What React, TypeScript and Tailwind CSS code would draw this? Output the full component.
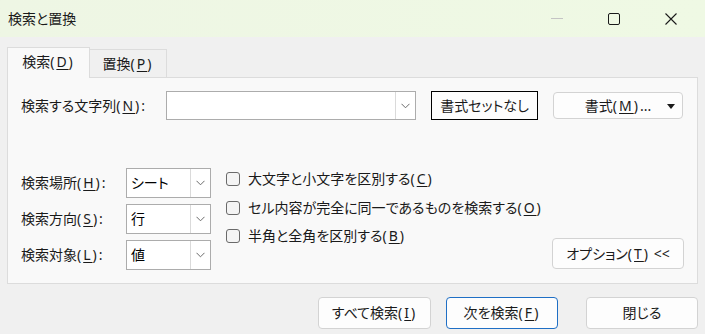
import React from 'react';

const font = { fontFamily: '"Noto Sans", "Noto Sans CJK JP", sans-serif', fontFeatureSettings: '"palt"' };

// mnemonic "(X)" with the wider paren spacing of the Windows UI font
const Mn = ({ k, colon }: { k: string; colon?: boolean }) => (
  <span className="tracking-[2px]">
    (<u className="underline-offset-2">{k}</u>){colon ? ':' : ''}
  </span>
);

const Chevron = () => (
  <svg width="9" height="6" viewBox="0 0 9 6" fill="none" stroke="#6b6b6b" strokeWidth="1">
    <path d="M0.5 0.8 L4.5 4.8 L8.5 0.8" />
  </svg>
);

const Select = ({ value }: { value: string }) => (
  <div className="flex h-[30px] w-[85px] border border-[#acacac] bg-white">
    <div className="flex-1 flex items-center pl-[4px] text-[14px] text-black">{value}</div>
    <div className="w-[20px] flex items-center justify-center border-l border-[#dadada]">
      <Chevron />
    </div>
  </div>
);

const Check = ({ children }: { children: React.ReactNode }) => (
  <div className="flex items-center h-[28.5px]">
    <div className="w-[14px] h-[14px] rounded-[3px] border border-[#6a6a6a] bg-[#f4f4f4]" />
    <span className="ml-[8px] text-[14px] text-[#1a1a1a]">{children}</span>
  </div>
);

const Btn = ({ children, primary, w }: { children: React.ReactNode; primary?: boolean; w: string }) => (
  <button
    className={`h-[32px] ${w} rounded-[4px] bg-[#fdfdfd] text-[14px] text-[#1a1a1a] flex items-center justify-center ${
      primary ? 'border border-[#1f6fc5]' : 'border border-[#d3d3d3]'
    }`}
  >
    {children}
  </button>
);

export default function App() {
  return (
    <div style={font} className="w-[705px] h-[334px] bg-[#f0f0f0] overflow-hidden leading-none">
      {/* title bar */}
      <div className="h-[37px] flex items-center bg-gradient-to-r from-[#eef6e4] to-[#eff9e4]">
        <span className="ml-[8px] text-[14px] text-[#1a1a1a]">検索と置換</span>
        <div className="ml-auto flex items-center">
          <div className="w-[57px] flex justify-center">
            <div className="w-[12px] h-px bg-[#c4c4c4]" />
          </div>
          <div className="w-[57px] flex justify-center">
            <div className="w-[12px] h-[12px] border border-[#1a1a1a] rounded-[2px]" />
          </div>
          <div className="w-[57px] flex justify-center">
            <svg width="12" height="12" viewBox="0 0 12 12" stroke="#1a1a1a" strokeWidth="1.1">
              <path d="M0.5 0.5 L11.5 11.5 M11.5 0.5 L0.5 11.5" />
            </svg>
          </div>
          <div className="w-[6px]" />
        </div>
      </div>

      {/* tabs */}
      <div className="pl-[7px] pt-[10px] flex items-end h-[40px] relative z-10">
        <div className="w-[83px] h-[31px] border border-b-0 border-[#dcdcdc] bg-[#f9f9f9] flex items-center justify-center text-[14px] text-[#1a1a1a] -mb-px pb-[2px]">
          検索<Mn k="D" />
        </div>
        <div className="w-[77px] h-[28px] border border-l-0 border-b-0 border-[#dcdcdc] bg-[#f0f0f0] flex items-center justify-center text-[14px] text-[#1a1a1a]">
          置換<Mn k="P" />
        </div>
      </div>

      {/* panel */}
      <div className="ml-[7px] w-[691px] h-[207px] border border-[#dcdcdc] bg-[#f9f9f9] pl-[13px] pt-[13px]">
        <div className="flex items-center h-[29px]">
          <span className="w-[145px] text-[14px] text-[#1a1a1a]">
            検索する文字列<Mn k="N" colon />
          </span>
          <div className="w-[250px] h-[29px] flex border border-[#acacac] bg-white">
            <div className="flex-1" />
            <div className="w-[20px] flex items-center justify-center border-l border-[#dadada]">
              <Chevron />
            </div>
          </div>
          <div className="ml-[15px] w-[107px] h-[29px] border border-black bg-[#fdfdfd] flex items-center justify-center text-[14px] text-[#1a1a1a]">
            書式セットなし
          </div>
          <div className="ml-[15px] w-[130px] h-[27px] relative rounded-[4px] border border-[#d3d3d3] bg-[#fdfdfd] flex items-center justify-center text-[14px] text-[#1a1a1a]">
            書式<Mn k="M" />...
            <svg className="absolute right-[7px] top-[11px]" width="8" height="5" viewBox="0 0 8 5">
              <path d="M0 0 H8 L4 5 Z" fill="#1a1a1a" />
            </svg>
          </div>
        </div>

        <div className="mt-[48px] flex">
          <div className="flex flex-col gap-[6px]">
            <div className="flex items-center">
              <span className="w-[105px] text-[14px] text-[#1a1a1a]">
                検索場所<Mn k="H" colon />
              </span>
              <Select value="シート" />
            </div>
            <div className="flex items-center">
              <span className="w-[105px] text-[14px] text-[#1a1a1a]">
                検索方向<Mn k="S" colon />
              </span>
              <Select value="行" />
            </div>
            <div className="flex items-center">
              <span className="w-[105px] text-[14px] text-[#1a1a1a]">
                検索対象<Mn k="L" colon />
              </span>
              <Select value="値" />
            </div>
          </div>

          <div className="ml-[15px] flex flex-col -mt-[3px]">
            <Check>
              大文字と小文字を区別する<Mn k="C" />
            </Check>
            <Check>
              セル内容が完全に同一であるものを検索する<Mn k="O" />
            </Check>
            <Check>
              半角と全角を区別する<Mn k="B" />
            </Check>
          </div>

          <div className="ml-auto mr-[13px] self-end">
            <div className="w-[132px] h-[31px] rounded-[4px] border border-[#d3d3d3] bg-[#fdfdfd] flex items-center justify-center text-[14px] text-[#1a1a1a] mb-px">
              オプション<Mn k="T" />&nbsp;&lt;&lt;
            </div>
          </div>
        </div>
      </div>

      {/* bottom buttons */}
      <div className="flex justify-end pr-[7px] mt-[13px]">
        <Btn w="w-[113px]">
          すべて検索<Mn k="I" />
        </Btn>
        <div className="w-[15px]" />
        <Btn w="w-[112px]" primary>
          次を検索<Mn k="F" />
        </Btn>
        <div className="w-[28px]" />
        <Btn w="w-[112px]">閉じる</Btn>
      </div>
    </div>
  );
}
